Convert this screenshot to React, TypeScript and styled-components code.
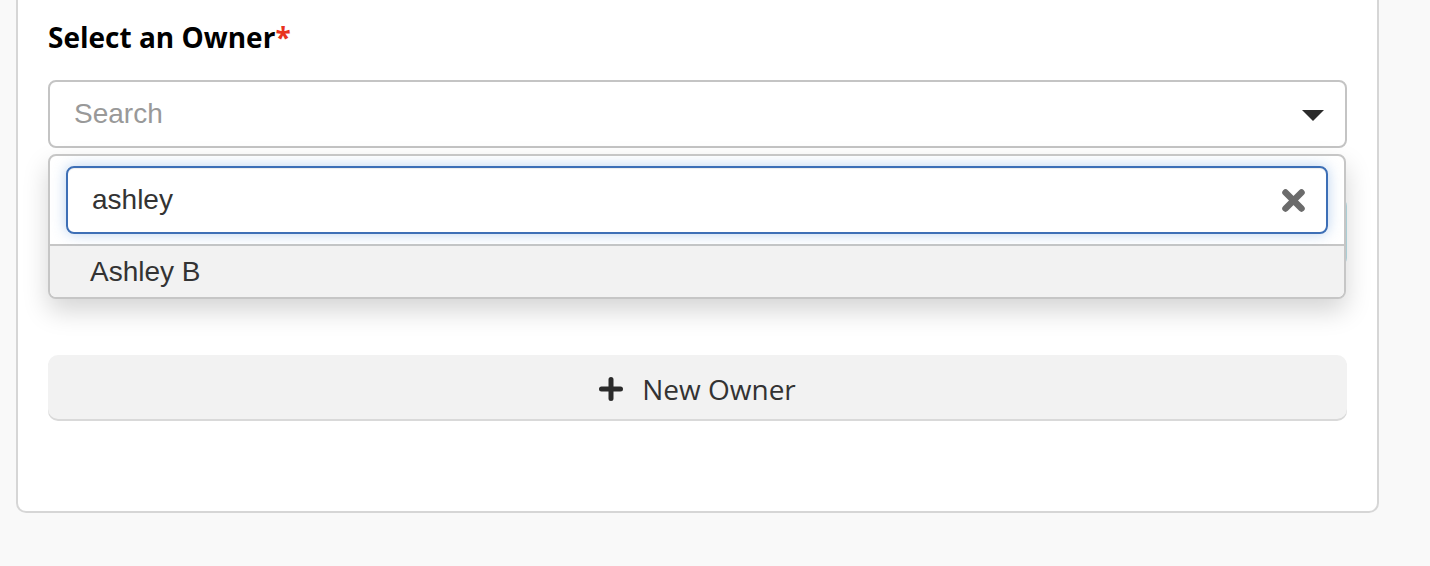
import React from "react";
import styled, { createGlobalStyle } from "styled-components";

const GlobalStyle = createGlobalStyle`
  html, body {
    margin: 0;
    padding: 0;
    background: #f9f9f9;
  }
  body {
    font-family: "Open Sans", "Liberation Sans", sans-serif;
    color: #333;
  }
  * { box-sizing: border-box; }
`;

const Page = styled.div`
  width: 1430px;
  height: 566px;
  padding-left: 16px;
  overflow: hidden;
`;

const Card = styled.div`
  width: 1363px;
  background: #fff;
  border: 2px solid #d6d6d6;
  border-top: none;
  border-radius: 0 0 10px 10px;
  padding: 17px 30px 92px;
`;

const Heading = styled.h3`
  margin: 0 0 23px;
  font-family: "Open Sans", sans-serif;
  font-weight: 700;
  font-size: 28px;
  line-height: 40px;
  color: #000;
`;

const Required = styled.span`
  color: #e8321f;
`;

const SelectWrap = styled.div`
  position: relative;
  z-index: 2;
`;

const SelectBox = styled.div`
  height: 68px;
  border: 2px solid #c4c4c4;
  border-radius: 8px;
  background: #fff;
  display: flex;
  align-items: center;
  justify-content: space-between;
  padding: 0 21px 0 24px;
  font-family: "Liberation Sans", Arial, sans-serif;
  font-size: 28px;
`;

const Placeholder = styled.span`
  color: #999;
`;

const Caret = styled.span`
  width: 0;
  height: 0;
  border-left: 11.5px solid transparent;
  border-right: 11.5px solid transparent;
  border-top: 11px solid #2b2b2b;
  margin-top: 2px;
`;

const Panel = styled.div`
  position: absolute;
  top: calc(100% + 6px);
  left: 0;
  right: 1px;
  background: #fff;
  border: 2px solid #c6c6c6;
  border-radius: 8px;
  box-shadow: 0 12px 26px rgba(0, 0, 0, 0.17);
  overflow: hidden;
`;

const SearchArea = styled.div`
  padding: 10px 16px;
  border-bottom: 2px solid #c6c6c6;
`;

const SearchInput = styled.div`
  height: 68px;
  border: 2px solid #3d6fb6;
  border-radius: 8px;
  box-shadow: inset 0 1px 1px rgba(0, 0, 0, 0.075), 0 0 14px rgba(102, 155, 220, 0.45);
  display: flex;
  align-items: center;
  justify-content: space-between;
  padding: 0 20px 0 24px;
  font-family: "Liberation Sans", Arial, sans-serif;
  font-size: 28px;
  color: #333;
`;

const Option = styled.div`
  height: 51px;
  background: #f2f2f2;
  display: flex;
  align-items: center;
  padding-left: 40px;
  font-family: "Liberation Sans", Arial, sans-serif;
  font-size: 28px;
  color: #333;
`;

const HiddenField = styled.div`
  margin-top: 50px;
  height: 68px;
  border: 2px solid #b9dfe7;
  border-radius: 8px;
  background: #fff;
`;

const NewButton = styled.button`
  display: flex;
  align-items: center;
  justify-content: center;
  gap: 19px;
  width: 100%;
  height: 64px;
  margin-top: 89px;
  border: none;
  border-radius: 10px;
  background: #f2f2f2;
  box-shadow: 0 2px 0 #d9d9d9;
  font-family: "Open Sans", sans-serif;
  font-size: 28px;
  color: #333;
  padding: 4px 0 0;
  cursor: pointer;
`;

const ClearIcon = () => (
  <svg width="25" height="25" viewBox="0 0 25 25">
    <path d="M4.5 4.5 L20.5 20.5 M20.5 4.5 L4.5 20.5" stroke="#6b6b6b" strokeWidth="6.5" strokeLinecap="round" />
  </svg>
);

const PlusIcon = () => (
  <svg width="24" height="24" viewBox="0 0 24 24">
    <path d="M12 2.5 V21.5 M2.5 12 H21.5" stroke="#2b2b2b" strokeWidth="5" strokeLinecap="round" />
  </svg>
);

export default function App() {
  return (
    <>
      <GlobalStyle />
      <Page>
        <Card>
          <Heading>
            Select an Owner<Required>*</Required>
          </Heading>
          <SelectWrap>
            <SelectBox>
              <Placeholder>Search</Placeholder>
              <Caret />
            </SelectBox>
            <Panel>
              <SearchArea>
                <SearchInput>
                  <span>ashley</span>
                  <ClearIcon />
                </SearchInput>
              </SearchArea>
              <Option>Ashley B</Option>
            </Panel>
          </SelectWrap>
          <HiddenField />
          <NewButton>
            <PlusIcon />
            <span>New Owner</span>
          </NewButton>
        </Card>
      </Page>
    </>
  );
}
